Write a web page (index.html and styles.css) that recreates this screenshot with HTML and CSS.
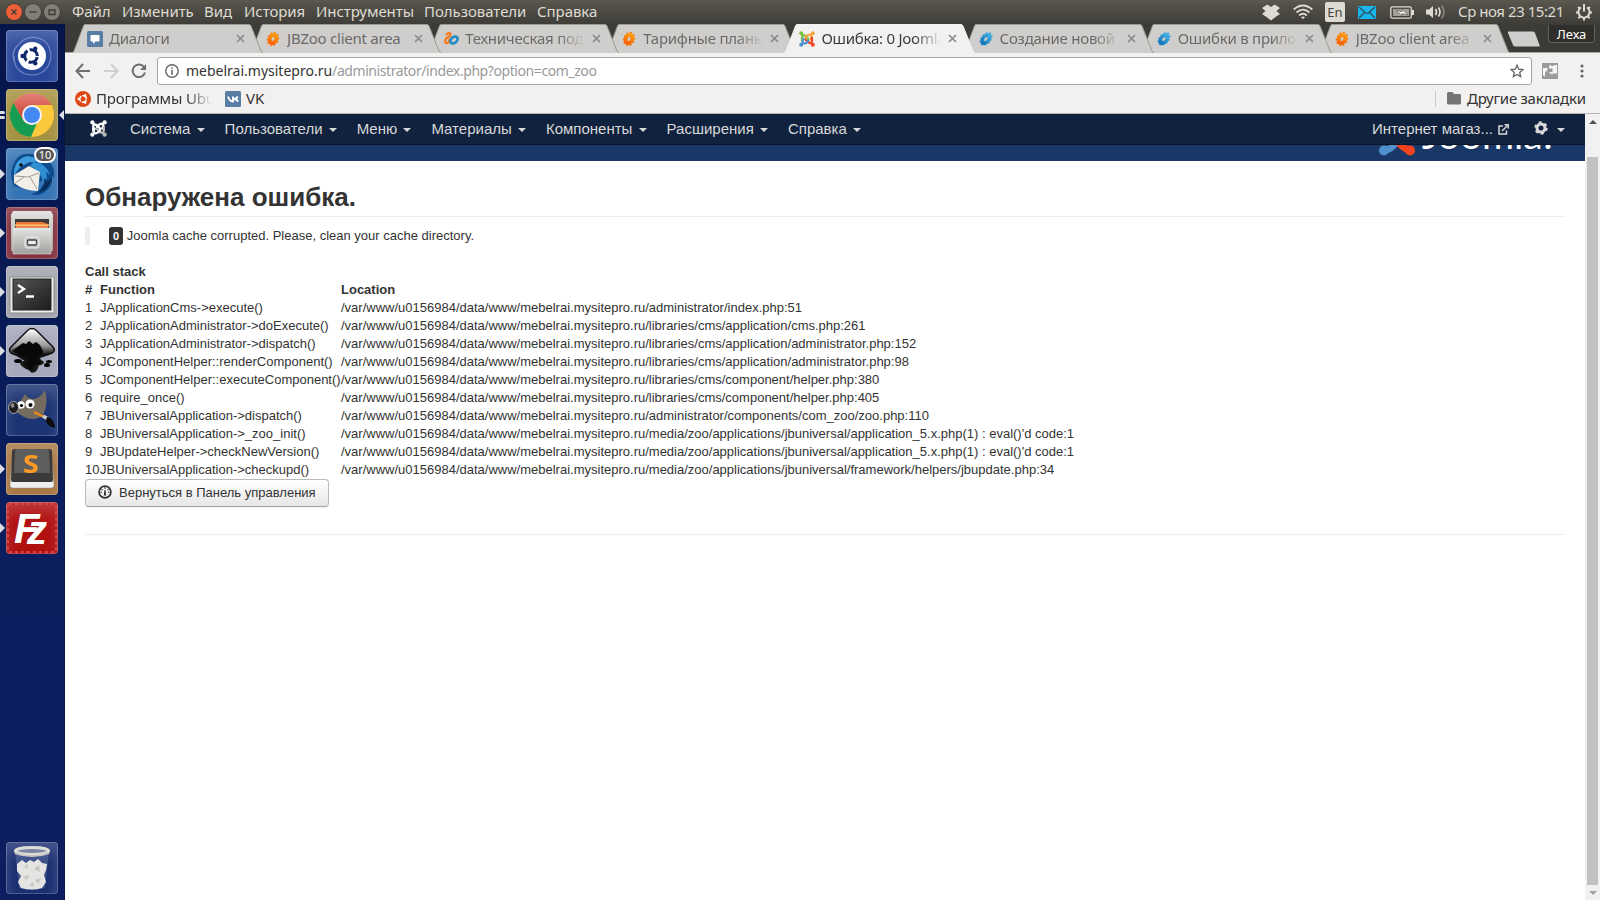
FILE: index.html
```html
<!DOCTYPE html>
<html lang="ru">
<head>
    <meta charset="utf-8">
    <title>Ошибка: 0 Joomla</title>
    <link rel="stylesheet" href="styles.css">
</head>
<body>
<!-- shared shapes -->
<svg class="defs" width="0" height="0">
    <defs>
        <linearGradient id="chromeRed" x1="0" y1="0" x2="0" y2="1"><stop offset="0" stop-color="#e2837a"/><stop offset="1" stop-color="#d0392d"/></linearGradient>
        <linearGradient id="metal" x1="0" y1="0" x2="0" y2="1"><stop offset="0" stop-color="#e4e4e2"/><stop offset="1" stop-color="#a09f9c"/></linearGradient>
        <linearGradient id="screen" x1="0" y1="0" x2="1" y2="1"><stop offset="0" stop-color="#555"/><stop offset="1" stop-color="#1c1c1c"/></linearGradient>
        <linearGradient id="ink" x1="0" y1="0" x2="0" y2="1"><stop offset="0" stop-color="#fff"/><stop offset="0.4" stop-color="#999"/><stop offset="0.6" stop-color="#111"/><stop offset="1" stop-color="#222"/></linearGradient>
        <linearGradient id="orange" x1="0" y1="0" x2="0" y2="1"><stop offset="0" stop-color="#ffa411"/><stop offset="1" stop-color="#f65a06"/></linearGradient>
        <linearGradient id="blue" x1="0" y1="0" x2="0" y2="1"><stop offset="0" stop-color="#43b4e6"/><stop offset="1" stop-color="#0f6db3"/></linearGradient>
        <symbol id="tab" viewBox="0 0 191 29">
            <path d="M0 29 Q1.500 28.500 2 27 L11.500 2 Q12 .5 13 .5 H177 Q178.500 .5 179 2 L189 27 Q189.500 28.500 191 29Z" class="tab-fill"/>
            <path d="M0 28.500 Q1.500 28.500 2 27 L11.500 2 Q12 .5 13 .5 H177 Q178.500 .5 179 2 L189 27 Q189.500 28.500 191 28.500" class="tab-line"/>
        </symbol>
        <symbol id="gear-orange" viewBox="0 0 16 16">
            <g transform="rotate(25 8 8)"><ellipse cx="8" cy="8" rx="5" ry="6.600" fill="none" stroke="#f77d0c" stroke-width="1.800" stroke-dasharray="2 1.600"/>
            <path fill="url(#orange)" fill-rule="evenodd" d="M8 1.800 A5 6.200 0 0 1 8 14.200 A5 6.200 0 0 1 8 1.800Z M8 6 A1.400 2 0 0 0 8 10 A1.400 2 0 0 0 8 6Z"/></g>
        </symbol>
        <symbol id="gear-blue" viewBox="0 0 16 16">
            <g transform="rotate(42 8 8)"><ellipse cx="8" cy="8" rx="4.400" ry="7" fill="none" stroke="#3aa0d8" stroke-width="1.600" stroke-dasharray="2 1.600"/>
            <path fill="url(#blue)" fill-rule="evenodd" d="M8 1.200 A4.600 6.800 0 0 1 8 14.800 A4.600 6.800 0 0 1 8 1.200Z M8 6 A1.200 2.200 0 0 0 8 10.400 A1.200 2.200 0 0 0 8 6Z"/></g>
        </symbol>
        <symbol id="joomla" viewBox="0 0 16 16">
            <g fill="none" stroke-width="2.200" stroke-linecap="round">
                <path class="j-g" d="M3 10 V6.500 Q3 3.500 6 4.500 L9.500 8 M2.500 2.500 L4 4.500"/>
                <path class="j-o" d="M6.500 6.500 L9 4 Q12.500 2.500 12.500 6 L11.500 8 M13.500 2.500 L12 4"/>
                <path class="j-r" d="M13 6.500 V10 Q12.500 13 9.500 11.500 L6.500 8.500 M13.500 13.500 L12 12"/>
                <path class="j-b" d="M9.500 9.500 L7 12 Q3.500 13.500 3.500 10 L4.500 8 M2.500 13.500 L4 12"/>
            </g>
            <circle class="j-gf" cx="2.200" cy="2.300" r="2"/><circle class="j-of" cx="13.800" cy="2.300" r="2"/>
            <circle class="j-rf" cx="13.800" cy="13.800" r="2"/><circle class="j-bf" cx="2.200" cy="13.800" r="2"/>
        </symbol>
        <symbol id="close" viewBox="0 0 9 9"><path d="M1 1 L8 8 M8 1 L1 8" stroke-width="1.700" fill="none"/></symbol>
        <symbol id="cof" viewBox="0 0 20 20">
            <circle cx="10" cy="10" r="5.500" fill="none" stroke="currentColor" stroke-width="2.600" stroke-dasharray="9.600 1.920" stroke-dashoffset="-1"/>
            <circle cx="2.600" cy="10" r="1.900" fill="currentColor"/><circle cx="13.700" cy="3.600" r="1.900" fill="currentColor"/><circle cx="13.700" cy="16.400" r="1.900" fill="currentColor"/>
        </symbol>
    </defs>
</svg>

<div class="panel">
    <div class="win-buttons">
        <span class="win win-close"><svg width="16" height="16" viewBox="0 0 16 16"><path d="M5.500 5.500 L10.500 10.500 M10.500 5.500 L5.500 10.500"/></svg></span>
        <span class="win"><svg width="16" height="16" viewBox="0 0 16 16"><path d="M4.500 8 H11.500"/></svg></span>
        <span class="win"><svg width="16" height="16" viewBox="0 0 16 16"><path d="M5 6 H11 V10.500 H5Z"/></svg></span>
    </div>
    <div class="menu">
        <span class="m1">Файл</span>
        <span class="m2">Изменить</span>
        <span class="m3">Вид</span>
        <span class="m4">История</span>
        <span class="m5">Инструменты</span>
        <span class="m6">Пользователи</span>
        <span class="m7">Справка</span>
    </div>
    <div class="indicators">
        <svg width="18" height="17" viewBox="0 0 18 17"><path fill="#dfdbd2" d="M5.300 .5 L9 3 12.700 .5 18 4 14.500 7 18 10 13.500 13 9 16.500 4.500 13 0 10 3.500 7 0 4Z"/></svg>
        <svg class="wifi" width="20" height="16" viewBox="0 0 20 16" fill="none" stroke="#dfdbd2" stroke-width="1.800"><path d="M.7 5.500 Q10 -2.500 19.300 5.500 M3.500 8.500 Q10 2.800 16.500 8.500 M6.200 11.500 Q10 8 13.800 11.500"/><path d="M8 13.500 Q10 11.500 12 13.500 L10 15Z" fill="#dfdbd2" stroke="none"/></svg>
        <span class="lang">En</span>
        <svg class="mail" width="18" height="13" viewBox="0 0 18 13"><path fill="#19b6ee" d="M0 0H18V13H0Z"/><path d="M1 1 L7 6.500 Q9 8 11 6.500 L17 1 M1 12 L6.500 6.500 M17 12 L11.500 6.500" fill="none" stroke="#2b4c55" stroke-width="1.200"/></svg>
        <svg class="battery" width="24" height="13" viewBox="0 0 24 13"><rect x=".8" y=".8" width="20.500" height="11.400" rx="1.500" fill="none" stroke="#dfdbd2" stroke-width="1.300"/><path fill="#a3a099" d="M3 3H19V10H3Z"/><path fill="#dfdbd2" d="M22 4H24V9H22Z"/><path fill="#fff" stroke="#55524b" stroke-width=".6" d="M6 4 L12 6 V3.500 L18 9 L12 7.500 V9.500Z"/></svg>
        <svg class="volume" width="20" height="16" viewBox="0 0 20 16"><path fill="#dfdbd2" d="M0 5.500H3L7 2V14L3 10.500H0Z"/><path d="M9.500 5 Q11.500 8 9.500 11 M12.500 3.500 Q15.500 8 12.500 12.500" fill="none" stroke="#dfdbd2" stroke-width="1.700"/><path d="M15.500 1.500 Q20.500 8 15.500 14.500" fill="none" stroke="#86837b" stroke-width="1.700"/></svg>
        <span class="clock">Ср ноя 23 15:21</span>
        <svg class="power" width="18" height="18" viewBox="0 0 18 18" fill="none" stroke="#dfdbd2"><path stroke-width="2" d="M6 4.300 A5.600 5.600 0 1 0 12 4.300 M9 1 V8.500"/><path stroke-width="2" d="M1 9.500H3.500 M14.500 9.500H17 M3.300 15.200L5 13.500 M14.700 15.200L13 13.500 M9 15V17.500 M3 4L4.800 5.500 M15 4L13.200 5.500"/></svg>
    </div>
</div>

<div class="desktop">
    <div class="launcher">
        <div class="tile tile-dash">
            <svg viewBox="0 0 52 52">
                <g fill="none" stroke="#a9b7e2" stroke-opacity=".55" stroke-width="1.200"><path d="M26 7 Q44 8 45 26 Q44 38 36 42 M8 26 Q8 44 26 45 Q37 45 42 36 M12 15 Q20 5 32 8 Q42 11 44 20 M9 34 Q4 22 12 15"/></g>
                <circle cx="26" cy="26" r="14" fill="#fff"/>
                <svg class="dash-cof" x="13" y="14.500" width="24" height="23"><use href="#cof"/></svg>
            </svg>
        </div>
        <div class="tile tile-chrome">
            <i class="pip pip-a"></i><i class="pip pip-b"></i><i class="focus"></i>
            <svg viewBox="0 0 52 52">
                <circle cx="26" cy="26" r="22" fill="#fdc93c"/>
                <path fill="url(#chromeRed)" d="M7.500 14 A22 22 0 0 1 45.500 16 H26 L17 31Z"/>
                <path fill="#169c53" d="M7.500 14 L17 31 A10.500 10.500 0 0 0 31 34 L25 48 A22 22 0 0 1 7.500 14Z"/>
                <circle cx="26" cy="26" r="10" fill="#f2f2f2"/><circle cx="26" cy="26" r="8" fill="#4488f4"/>
            </svg>
        </div>
        <div class="tile tile-bird">
            <i class="arrow"></i>
            <svg viewBox="0 0 52 52">
                <path fill="#0f4c8d" d="M8 38 Q2 25 9 13 Q14 5 22 6 Q34 5 42 12 Q49 18 48 30 L46 28 Q47 38 40 43 Q34 49 25 46 Q37 43 38 32 L15 40Z"/>
                <path fill="#3f9ddb" d="M8 22 Q11 10 21 8 Q32 9 36 16 Q26 11 18 17 Q13 19 8 28Z"/>
                <path fill="#2f8fd2" d="M27 14 Q40 15 44 27 L40 24 Q42 32 38 38 Q36 23 24 18Z"/>
                <path fill="#f2eee8" d="M8 27 L23 18 L34 24 L32 43 Q18 43 8 35Z"/>
                <path fill="none" stroke="#a49d92" d="M9 28 L22 29 L33 25 M9 35 L18 29 M31 41 L24 29"/>
                <path fill="#072b5a" d="M38 30 Q40 38 32 45 Q45 41 46 28 L42 34Z"/>
                <circle cx="15" cy="17" r="1.800" fill="#111"/>
            </svg>
            <span class="count">10</span>
        </div>
        <div class="tile tile-files">
            <i class="arrow"></i>
            <svg viewBox="0 0 52 52">
                <path fill="url(#metal)" d="M7 4 H45 L47 8 V44 H5 V8Z"/><path fill="#3f3d3a" d="M9 12H43V25H9Z"/>
                <path fill="#ea7635" d="M10 15H36L42 17V23H10Z"/><path fill="#ffc276" d="M9 17.500H43V19H9Z"/>
                <path fill="url(#metal)" stroke="#ddd" stroke-width=".6" d="M7 21H45V47H7Z"/>
                <rect x="19" y="30" width="14" height="11" rx="2" fill="#c6c6c4" stroke="#eee"/><rect x="21.500" y="33" width="9" height="5" rx="1" fill="#eee" stroke="#444" stroke-width="1.300"/>
            </svg>
        </div>
        <div class="tile tile-term">
            <i class="arrow"></i>
            <svg viewBox="0 0 52 52">
                <rect x="4" y="11" width="44" height="36" rx="1.500" fill="#eee" stroke="#888"/><rect x="7" y="13" width="38" height="31" fill="url(#screen)" stroke="#222"/>
                <path d="M12 19 L18 23 L12 27 M20 30.500 H28" fill="none" stroke="#fff" stroke-width="2.300"/>
            </svg>
        </div>
        <div class="tile tile-ink">
            <i class="arrow"></i>
            <svg viewBox="0 0 52 52">
                <path fill="url(#ink)" stroke="#111" stroke-width="1.500" d="M22 5 Q26 2 30 5 L47 22 Q50 26 46 28 Q38 31 34 32 Q32 35 37 37 Q37 39 32 40 Q31 47 26 47 Q24 44 20 43 Q12 39 17 37 Q22 36 15 33 Q11 30 5 28 Q2 25 5 22Z"/>
                <path fill="#090909" d="M14 20 L17 18 L20 19 L23 16 L27 19 L30 17 L34 20 L37 26 L36 30 L31 31 L32 35 L36 38 L29 40 L27 46 L21 42 L17 39 L23 36 L14 30 L6 26Z"/>
                <ellipse cx="12" cy="36" rx="4" ry="2"/><ellipse cx="41" cy="40" rx="3" ry="2"/><ellipse cx="43" cy="36.500" rx="3" ry="1.500"/>
            </svg>
        </div>
        <div class="tile tile-gimp">
            <svg viewBox="0 0 52 52">
                <path fill="#746c5e" d="M39 6 Q43 20 37 31 Q29 38 18 33 Q13 30 9 27 Q13 18 19 10 Q23 17 31 14 Q36 12 39 6Z"/>
                <circle cx="15" cy="21" r="3.800" fill="#fff"/><circle cx="24" cy="20" r="4.600" fill="#fff"/><circle cx="15.500" cy="21.500" r="1.600"/><circle cx="24.500" cy="21" r="2"/>
                <ellipse cx="7.500" cy="23.500" rx="5" ry="6" fill="#1d1d1d" stroke="#ccc" stroke-width=".8"/><ellipse cx="6.500" cy="21.500" rx="2" ry="2.300" fill="#888"/>
                <path d="M28 28 L38 33" stroke="#f28a1c" stroke-width="2.500"/><path d="M37 32 L42 35" stroke="#ccc" stroke-width="3.500"/><path fill="#0b0b0b" d="M41 33 Q48 34 49 44 Q40 42 40 36Z"/>
            </svg>
        </div>
        <div class="tile tile-subl">
            <i class="arrow"></i>
            <svg viewBox="0 0 52 52">
                <path fill="#eee" stroke="#999" stroke-width=".5" d="M7 8 H45 L48 42 Q48 45 45 45 H7 Q4 45 4 42Z"/>
                <path fill="#3a3a3a" d="M9 6 H43 Q46 6 46 9 L47 37 Q47 39 45 39 H7 Q5 39 5 37 L6 9 Q6 6 9 6Z"/><path fill="#5e5e5e" d="M11 6 H41 Q43 6 43 8 L44 30 H8 L9 8 Q9 6 11 6Z"/>
            </svg>
            <span class="letter-s">S</span>
        </div>
        <div class="tile tile-fz">
            <i class="arrow"></i>
            <svg viewBox="0 0 52 52"><rect x="2" y="2" width="48" height="48" rx="1" fill="none" stroke="#d34747" stroke-width="2" stroke-dasharray="3 3"/></svg>
            <span class="letter-f">F</span><span class="letter-z">z</span>
        </div>
        <div class="tile tile-trash">
            <svg viewBox="0 0 52 52">
                <path fill="#8e9cc8" fill-opacity=".3" d="M9 10 H43 L39 46 Q26 50 13 46Z"/>
                <path fill="#e4e4e2" d="M11 22 L16 18 L20 21 L24 18 L28 20 L32 17 L36 21 L41 22 L40 28 L38 33 L40 40 L36 46 Q26 49 15 46 L12 40 L15 34 L11 29Z"/>
                <path fill="#c6c6c4" d="M18 24 L22 22 L21 27Z M28 27 L33 23 L34 30Z M17 35 L23 33 L21 38Z M29 38 L35 36 L32 42Z M23 43 L27 40 L28 45Z"/>
                <ellipse cx="26" cy="9" rx="16.500" ry="3.500" fill="#7d83a4" stroke="#deded9" stroke-width="3"/>
                <path d="M9 11 Q26 17 43 11" fill="none" stroke="#c9c9c4" stroke-width="2"/>
            </svg>
        </div>
    </div>

    <div class="browser">
        <div class="tabstrip">
            <div class="tab z8">
                <svg class="shape"><use href="#tab"/></svg>
                <svg class="fav" viewBox="0 0 16 16"><rect width="16" height="16" rx="1.500" fill="#587ea5"/><path fill="#fff" d="M4.500 4H11.500Q12.500 4 12.500 5V9.500Q12.500 10.500 11.500 10.500H8.500L6 13V10.500H4.500Q3.500 10.500 3.500 9.500V5Q3.500 4 4.500 4Z"/></svg>
                <span class="title">Диалоги</span><svg class="x"><use href="#close"/></svg>
            </div>
            <div class="tab z7">
                <svg class="shape"><use href="#tab"/></svg><svg class="fav"><use href="#gear-orange"/></svg>
                <span class="title title-full">JBZoo client area</span><svg class="x"><use href="#close"/></svg>
            </div>
            <div class="tab z6">
                <svg class="shape"><use href="#tab"/></svg>
                <svg class="fav" viewBox="0 0 16 16"><path d="M3 4 Q6 .5 7.500 3 Q7 6 3.500 7 Q1 10.500 3 12 Q6 13 6.500 8" fill="none" stroke="#f47b20" stroke-width="2.300"/><ellipse cx="11" cy="9" rx="2.800" ry="4" transform="rotate(50 11 9)" fill="none" stroke="#2289c8" stroke-width="2.600"/></svg>
                <span class="title">Техническая поддержка</span><svg class="x"><use href="#close"/></svg>
            </div>
            <div class="tab z5">
                <svg class="shape"><use href="#tab"/></svg><svg class="fav"><use href="#gear-orange"/></svg>
                <span class="title">Тарифные планы</span><svg class="x"><use href="#close"/></svg>
            </div>
            <div class="tab active">
                <svg class="shape"><use href="#tab"/></svg><svg class="fav"><use href="#joomla"/></svg>
                <span class="title">Ошибка: 0 Joomla</span><svg class="x"><use href="#close"/></svg>
            </div>
            <div class="tab z3">
                <svg class="shape"><use href="#tab"/></svg><svg class="fav"><use href="#gear-blue"/></svg>
                <span class="title">Создание новой</span><svg class="x"><use href="#close"/></svg>
            </div>
            <div class="tab z2">
                <svg class="shape"><use href="#tab"/></svg><svg class="fav"><use href="#gear-blue"/></svg>
                <span class="title">Ошибки в приложении</span><svg class="x"><use href="#close"/></svg>
            </div>
            <div class="tab z1">
                <svg class="shape"><use href="#tab"/></svg><svg class="fav"><use href="#gear-orange"/></svg>
                <span class="title">JBZoo client area</span><svg class="x"><use href="#close"/></svg>
            </div>
            <svg class="newtab" width="34" height="16" viewBox="0 0 34 16"><path fill="#d0cecc" d="M2 .5H26Q27.500 .5 28 2L32.500 14Q33 15.500 31.500 15.500H8Q6.500 15.500 6 14L1 2Q.5 .5 2 .5Z"/></svg>
            <div class="profile">Леха</div>
        </div>

        <div class="toolbar">
            <svg class="back" width="16" height="16" viewBox="0 0 16 16"><path d="M8 1 L1.500 8 L8 15 M1.500 8 H15"/></svg>
            <svg class="forward" width="16" height="16" viewBox="0 0 16 16"><path d="M8 1 L14.500 8 L8 15 M14.500 8 H1"/></svg>
            <svg class="reload" width="16" height="16" viewBox="0 0 16 16"><path d="M13 4 A6.300 6.300 0 1 0 14 9.500"/><path class="solid" d="M15 1V7H9Z"/></svg>
            <div class="omnibox">
                <svg width="14" height="14" viewBox="0 0 14 14"><circle cx="7" cy="7" r="6.200" fill="none" stroke="#666" stroke-width="1.400"/><path fill="#666" d="M6.200 3.200H7.800V4.800H6.200Z M6.200 6H7.800V10.800H6.200Z"/></svg>
                <span class="url"><b>mebelrai.mysitepro.ru</b>/administrator/index.php?option=com_zoo</span>
                <svg class="star" width="14" height="14" viewBox="0 0 14 14"><path fill="none" stroke="#666" stroke-width="1.300" d="M7 1.200 L8.700 5.200 13 5.600 9.700 8.400 10.700 12.600 7 10.400 3.300 12.600 4.300 8.400 1 5.600 5.300 5.200Z"/></svg>
            </div>
            <svg class="ext" width="16" height="16" viewBox="0 0 16 16"><path fill="#9b9b9b" d="M0 0H16V16H0Z"/><path fill="#f4f4f4" d="M7 3 L9 1.500 V3 H12 V2 H15 V10.500 H11 L9.500 12 V10.500 H7.500 V9 H10.500 V5.500 H7Z"/><path fill="#f4f4f4" d="M1 5 H5.500 V7 L3 9.500 V14 L1 12Z"/></svg>
            <svg class="dots" width="4" height="14" viewBox="0 0 4 14"><circle cx="2" cy="2" r="1.600"/><circle cx="2" cy="7" r="1.600"/><circle cx="2" cy="12" r="1.600"/></svg>
        </div>

        <div class="bookmarks">
            <svg class="bm-ubuntu" width="16" height="16" viewBox="0 0 16 16"><circle cx="8" cy="8" r="8" fill="#dd4814"/><svg x="2" y="2" width="12" height="12"><use href="#cof"/></svg></svg>
            <span class="bm-apps">Программы Ubuntu</span>
            <svg class="bm-vkicon" width="16" height="16" viewBox="0 0 16 16"><rect width="16" height="16" rx="1.500" fill="#587ea5"/><path d="M3 5.500 Q4.500 10.500 8 10.500 V5.500 M12.800 5.500 Q11.500 8 8.500 8 Q12 8 13 10.700" fill="none" stroke="#fff" stroke-width="1.900"/></svg>
            <span class="bm-vk">VK</span>
            <div class="other">
                <svg width="14" height="13" viewBox="0 0 14 13"><path fill="#757575" d="M1.500 0H5.500L7 2H12.500Q14 2 14 3.500V11Q14 12.500 12.500 12.500H1.500Q0 12.500 0 11V1.500Q0 0 1.500 0Z"/></svg>
                <span class="bm-other">Другие закладки</span>
            </div>
        </div>

        <div class="viewport">
            <div class="page">
                <div class="navbar">
                    <svg class="brand" width="17" height="17"><use href="#joomla"/></svg>
                    <span class="nav">Система<i class="caret"></i></span>
                    <span class="nav">Пользователи<i class="caret"></i></span>
                    <span class="nav">Меню<i class="caret"></i></span>
                    <span class="nav">Материалы<i class="caret"></i></span>
                    <span class="nav">Компоненты<i class="caret"></i></span>
                    <span class="nav">Расширения<i class="caret"></i></span>
                    <span class="nav">Справка<i class="caret"></i></span>
                    <span class="site">Интернет магаз...
                        <svg width="11" height="11" viewBox="0 0 11 11" fill="none" stroke="#d9d9d9" stroke-width="1.500"><path d="M5 2H1V10H8.500V6.500 M4 7L9.500 1.500"/><path d="M6.500 .8H10.200V4.500"/></svg>
                    </span>
                    <span class="cog">
                        <svg width="14" height="14" viewBox="0 0 14 14"><circle cx="7" cy="7" r="4" fill="none" stroke="#d9d9d9" stroke-width="3"/><circle cx="7" cy="7" r="5.600" fill="none" stroke="#d9d9d9" stroke-width="2.200" stroke-dasharray="2.900 2.960"/></svg>
                        <i class="caret"></i>
                    </span>
                </div>
                <div class="header">
                    <div class="logo">
                        <svg width="38" height="38" viewBox="0 0 38 38"><path d="M6 32 Q12 32 15 28 L22 20" fill="none" stroke="#5091cd" stroke-width="7"/><path d="M32 33 Q25 30 20 24 L15 20" fill="none" stroke="#f44321" stroke-width="7"/><circle cx="6" cy="32.500" r="5" fill="#5091cd"/><circle cx="32" cy="32.500" r="5" fill="#f44321"/></svg>
                        <span>Joomla!</span>
                    </div>
                </div>
                <div class="content">
                    <h1>Обнаружена ошибка.</h1>
                    <blockquote><span class="label">0</span> Joomla cache corrupted. Please, clean your cache directory.</blockquote>
                    <table>
                        <tr><th colspan="3">Call stack</th></tr>
                        <tr><th class="num">#</th><th class="func">Function</th><th>Location</th></tr>
                        <tr><td>1</td><td>JApplicationCms-&gt;execute()</td><td>/var/www/u0156984/data/www/mebelrai.mysitepro.ru/administrator/index.php:51</td></tr>
                        <tr><td>2</td><td>JApplicationAdministrator-&gt;doExecute()</td><td>/var/www/u0156984/data/www/mebelrai.mysitepro.ru/libraries/cms/application/cms.php:261</td></tr>
                        <tr><td>3</td><td>JApplicationAdministrator-&gt;dispatch()</td><td>/var/www/u0156984/data/www/mebelrai.mysitepro.ru/libraries/cms/application/administrator.php:152</td></tr>
                        <tr><td>4</td><td>JComponentHelper::renderComponent()</td><td>/var/www/u0156984/data/www/mebelrai.mysitepro.ru/libraries/cms/application/administrator.php:98</td></tr>
                        <tr><td>5</td><td>JComponentHelper::executeComponent()</td><td>/var/www/u0156984/data/www/mebelrai.mysitepro.ru/libraries/cms/component/helper.php:380</td></tr>
                        <tr><td>6</td><td>require_once()</td><td>/var/www/u0156984/data/www/mebelrai.mysitepro.ru/libraries/cms/component/helper.php:405</td></tr>
                        <tr><td>7</td><td>JBUniversalApplication-&gt;dispatch()</td><td>/var/www/u0156984/data/www/mebelrai.mysitepro.ru/administrator/components/com_zoo/zoo.php:110</td></tr>
                        <tr><td>8</td><td>JBUniversalApplication-&gt;_zoo_init()</td><td>/var/www/u0156984/data/www/mebelrai.mysitepro.ru/media/zoo/applications/jbuniversal/application_5.x.php(1) : eval()'d code:1</td></tr>
                        <tr><td>9</td><td>JBUpdateHelper-&gt;checkNewVersion()</td><td>/var/www/u0156984/data/www/mebelrai.mysitepro.ru/media/zoo/applications/jbuniversal/application_5.x.php(1) : eval()'d code:1</td></tr>
                        <tr><td>10</td><td>JBUniversalApplication-&gt;checkupd()</td><td>/var/www/u0156984/data/www/mebelrai.mysitepro.ru/media/zoo/applications/jbuniversal/framework/helpers/jbupdate.php:34</td></tr>
                    </table>
                    <a class="btn">
                        <svg width="14" height="14" viewBox="0 0 14 14"><circle cx="7" cy="7" r="5.900" fill="none" stroke="#333" stroke-width="1.700"/><path fill="#333" d="M6.400 5H7.600L8.200 10.500H5.800Z M6.300 2.300H7.700V3.700H6.300Z M3.400 4H4.600V5.200H3.400Z M9.400 4H10.600V5.200H9.400Z M2.600 6.800H3.800V8H2.600Z M10.200 6.800H11.400V8H10.200Z"/></svg>
                        Вернуться в Панель управления
                    </a>
                    <hr>
                </div>
            </div>
            <div class="scrollbar">
                <i class="up"></i>
                <div class="thumb"></div>
                <i class="down"></i>
            </div>
        </div>
    </div>
</div>
</body>
</html>
```

FILE: styles.css
```css
* {
    box-sizing: border-box;
}

body {
    margin: 0;
    width: 1600px;
    height: 900px;
    overflow: hidden;
    display: flex;
    flex-direction: column;
    font-family: "Noto Sans", "Open Sans", sans-serif;
    font-size: 15px;
    color: #333;
    background: #fff;
}

svg {
    display: block;
    flex: none;
}

.defs {
    position: absolute;
}

/* top panel */
.panel {
    display: flex;
    align-items: center;
    height: 24px;
    flex: none;
    padding-left: 6px;
    padding-right: 7px;
    background: linear-gradient(#5c5a4e, #55524a 15%, #3e3d38);
    color: #dfdbd2;
    white-space: nowrap;
}

.win-buttons {
    display: flex;
    gap: 3px;
    width: 66px;
    margin-top: -1px;
}

.win {
    width: 16px;
    height: 16px;
    border-radius: 50%;
    background: #807e77;
    box-shadow: 0 0 0 0.5px #34332e;
}

.win svg {
    fill: none;
    stroke: #3c3b37;
    stroke-width: 1.3;
}

.win-close {
    background: #ed5f37;
}

.menu {
    display: flex;
    gap: 12px;
    padding-bottom: 2px;
    line-height: 22px;
    letter-spacing: -0.05px;
}

.m1 { width: 38px; }
.m2 { width: 70px; }
.m3 { width: 28px; }
.m4 { width: 60px; }
.m5 { width: 96px; }
.m6 { width: 101px; }

.indicators {
    display: flex;
    align-items: center;
    margin-left: auto;
}

.wifi { margin-left: 13px; }

.lang {
    width: 20px;
    height: 20px;
    margin-left: 12px;
    border-radius: 2px;
    background: #dfdbd2;
    color: #45433d;
    font-size: 13px;
    line-height: 20px;
    text-align: center;
}

.mail { margin-left: 13px; }
.battery { margin-left: 14px; }
.volume { margin-left: 12px; }

.clock {
    width: 104px;
    margin-left: 12px;
    padding-bottom: 2px;
    letter-spacing: -0.45px;
}

.power { margin-left: 13px; }

.desktop {
    display: flex;
    flex: 1;
    min-height: 0;
}

/* launcher */
.launcher {
    display: flex;
    flex-direction: column;
    gap: 7px;
    width: 65px;
    padding: 6px 0 6px 6px;
    background: linear-gradient(#06154a, #0a1d5c 50%, #0c1e60);
    border-right: 1px solid #0a1640;
}

.tile {
    position: relative;
    width: 52px;
    height: 52px;
    flex: none;
    border-radius: 4px;
    box-shadow: inset 0 0 0 1px rgba(255, 255, 255, 0.2), inset 0 10px 14px rgba(255, 255, 255, 0.18);
}

.tile > svg {
    width: 52px;
    height: 52px;
}

.tile-dash { background: #29479b; }
.dash-cof { color: #10276a; }
.tile-chrome { background: #a59240; }
.tile-bird { background: #3573b4; }
.tile-files { background: #83323f; }
.tile-term { background: #a3a5ad; }
.tile-ink { background: #a4a8ba; }
.tile-gimp { background: #1c3474; }
.tile-subl { background: #a97744; }
.tile-fz { background: #b01010; }

.tile-trash {
    margin-top: auto;
    background: #1c2f71;
}

/* running markers beside a tile */
.arrow {
    position: absolute;
    left: -6px;
    top: 21px;
    border: 5px solid transparent;
    border-left-color: #dcdde4;
    border-right: 0;
}

.focus {
    position: absolute;
    right: -6px;
    top: 21px;
    border: 5px solid transparent;
    border-right-color: #dcdde4;
    border-left: 0;
}

.pip {
    position: absolute;
    left: -6px;
    width: 5px;
    height: 3px;
    background: #dcdde4;
    border-radius: 0 2px 2px 0;
}

.pip-a { top: 22px; }
.pip-b { top: 27px; }

.count {
    position: absolute;
    top: -1px;
    right: 2px;
    width: 22px;
    height: 16px;
    border: 2px solid #fff;
    border-radius: 8px;
    background: #555;
    color: #fff;
    font-size: 11px;
    line-height: 12px;
    text-align: center;
}

.letter-s,
.letter-f,
.letter-z {
    position: absolute;
    font-weight: bold;
    line-height: 1;
}

.letter-s {
    left: 17px;
    top: 8px;
    font-size: 25px;
    color: #ff9a24;
    transform: scaleX(1.15);
    transform-origin: left;
}

.letter-f,
.letter-z {
    font-family: "Liberation Sans", sans-serif;
    font-style: italic;
    color: #fff;
}

.letter-f {
    left: 8px;
    top: 6px;
    font-size: 42px;
}

.letter-z {
    left: 21px;
    top: 8px;
    font-size: 40px;
}

/* tabs */
.browser {
    display: flex;
    flex-direction: column;
    flex: 1;
    min-width: 0;
    background: #f2f1f0;
}

.tabstrip {
    display: flex;
    height: 29px;
    flex: none;
    padding-left: 7px;
    background: #3c3b37;
    border-bottom: 1px solid #a5a4a2;
}

.tab {
    position: relative;
    display: flex;
    align-items: center;
    width: 191px;
    height: 29px;
    flex: none;
    margin-right: -12.9px;
    padding: 0 18px 0 15px;
    color: #6b6a68;
}

.shape {
    position: absolute;
    left: 0;
    top: 0;
    width: 191px;
    height: 29px;
    fill: #d0cecc;
    stroke: #9c9a97;
}

.tab-line {
    fill: none;
}

.tab-fill {
    stroke: none;
}

.active {
    z-index: 9;
    color: #3c3c3c;
}

.active .shape {
    fill: #f2f1f0;
    stroke: #f2f1f0;
}

.z8 { z-index: 8; }
.z7 { z-index: 7; }
.z6 { z-index: 6; }
.z5 { z-index: 5; }
.z3 { z-index: 3; }
.z2 { z-index: 2; }
.z1 { z-index: 1; }

.fav {
    position: relative;
    width: 16px;
    height: 16px;
}

.title {
    position: relative;
    flex: 1;
    min-width: 0;
    margin-left: 6px;
    margin-right: 7px;
    padding-bottom: 2px;
    overflow: hidden;
    white-space: nowrap;
    letter-spacing: -0.25px;
    -webkit-mask-image: linear-gradient(90deg, #000 78%, transparent);
    mask-image: linear-gradient(90deg, #000 78%, transparent);
}

.title-full {
    -webkit-mask-image: none;
    mask-image: none;
}

.x {
    position: relative;
    width: 9px;
    height: 9px;
    stroke: #8b8a88;
}

.j-g { stroke: #7ac143; }
.j-o { stroke: #f9a541; }
.j-r { stroke: #f44321; }
.j-b { stroke: #5091cd; }
.j-gf { fill: #7ac143; }
.j-of { fill: #f9a541; }
.j-rf { fill: #f44321; }
.j-bf { fill: #5091cd; }

.newtab {
    margin: 7px 0 0 10px;
}

.profile {
    width: 47px;
    height: 18px;
    margin: 1px 5px 0 auto;
    border: 1px solid #62615d;
    border-top: 0;
    border-radius: 0 0 4px 4px;
    background: #2f2e2b;
    color: #fff;
    font-size: 13px;
    line-height: 18px;
    text-align: center;
}

/* toolbar */
.toolbar {
    display: flex;
    align-items: center;
    height: 36px;
    flex: none;
    padding: 0 16px 0 10px;
}

.toolbar > svg {
    fill: none;
    stroke: #6f6f6f;
    stroke-width: 2;
}

.forward {
    margin-left: 12px;
    opacity: 0.25;
}

.reload {
    margin-left: 12px;
}

.toolbar .solid {
    fill: #6f6f6f;
    stroke: none;
}

.omnibox {
    display: flex;
    align-items: center;
    width: 1375px;
    height: 28px;
    margin-left: 10px;
    padding: 0 7px;
    border: 1px solid #a7a6a4;
    border-radius: 3px;
    background: #fff;
}

.url {
    margin-left: 7px;
    padding-bottom: 1px;
    color: #999;
    font-size: 14px;
    letter-spacing: -0.42px;
    white-space: nowrap;
}

.url b {
    font-weight: normal;
    letter-spacing: 0;
    color: #333;
}

.star {
    margin-left: auto;
}

.toolbar .ext {
    margin-left: 10px;
    stroke: none;
}

.toolbar .dots {
    margin-left: auto;
    stroke: none;
    fill: #666;
}

.bookmarks {
    display: flex;
    align-items: center;
    height: 25px;
    flex: none;
    border-bottom: 1px solid #b5b4b2;
    padding: 0 13px 5px 10px;
    white-space: nowrap;
}

.bm-ubuntu {
    color: #fff;
}

.bm-apps {
    width: 116px;
    margin-left: 5px;
    padding-bottom: 1px;
    overflow: hidden;
    letter-spacing: -0.15px;
    -webkit-mask-image: linear-gradient(90deg, #000 78%, transparent);
    mask-image: linear-gradient(90deg, #000 78%, transparent);
}

.bm-vkicon {
    margin-left: 13px;
}

.bm-vk {
    margin-left: 5px;
    padding-bottom: 1px;
}

.other {
    display: flex;
    align-items: center;
    gap: 6px;
    height: 16px;
    margin-left: auto;
    padding-left: 11px;
    border-left: 1px solid #c9c8c6;
}

.bm-other {
    width: 120px;
    padding-bottom: 2px;
    letter-spacing: -0.25px;
}

/* joomla administrator */
.viewport {
    display: flex;
    flex: 1;
    min-height: 0;
    background: #fff;
    font-family: "Liberation Sans", Arial, sans-serif;
    font-size: 13px;
    line-height: 18px;
}

.page {
    flex: 1;
    min-width: 0;
}

.navbar {
    display: flex;
    align-items: center;
    height: 31px;
    padding: 0 20px 0 25px;
    background: #10223e;
    border-bottom: 1px solid #0a1528;
    color: #d9d9d9;
    font-size: 15px;
}

.brand {
    margin-right: 13px;
    margin-top: -2px;
}

.navbar .brand {
    filter: grayscale(1) brightness(1.8);
}

.nav {
    padding: 0 10px;
}

.caret {
    display: inline-block;
    margin-left: 6.2px;
    border: 4px solid transparent;
    border-top-color: #d9d9d9;
    border-bottom: 0;
    vertical-align: 2px;
}

.site {
    display: flex;
    align-items: center;
    gap: 5px;
    margin-left: auto;
}

.cog {
    display: flex;
    align-items: center;
    gap: 9px;
    margin-left: 25px;
}

.cog svg {
    margin-top: -3px;
}

.cog .caret {
    margin: 2px 0 0;
}

.header {
    height: 16px;
    padding-right: 29px;
    background: #1a3867;
    overflow: hidden;
}

.logo {
    display: flex;
    justify-content: flex-end;
    margin-top: -27px;
}

.logo span {
    width: 134px;
    margin-top: -3px;
    margin-left: 6px;
    color: #fff;
    font-family: Lato, sans-serif;
    font-size: 39px;
    line-height: 38px;
}

.content {
    padding: 20px 20px 0;
}

h1 {
    margin: 0 0 10px;
    padding-bottom: 1px;
    height: 36px;
    border-bottom: 1px solid #eee;
    font-size: 26px;
    line-height: 32px;
}

blockquote {
    margin: 0 0 18px;
    padding-left: 19px;
    height: 18px;
    border-left: 5px solid #eee;
}

.label {
    display: inline-block;
    padding: 0 4px;
    height: 18px;
    border-radius: 3px;
    background: #333;
    color: #fff;
    font-size: 11px;
    font-weight: bold;
}

table {
    border-collapse: collapse;
}

th,
td {
    padding: 0;
    text-align: left;
    white-space: nowrap;
}

.num {
    width: 15px;
}

.func {
    width: 241px;
}

.btn {
    display: flex;
    align-items: center;
    gap: 7px;
    width: 244px;
    height: 28px;
    padding: 0 12px;
    border: 1px solid #bbb;
    border-bottom-color: #a2a2a2;
    border-radius: 4px;
    background: linear-gradient(#fff, #e6e6e6);
    box-shadow: 0 1px 2px rgba(0, 0, 0, 0.05);
}

.btn svg {
    margin-top: -2px;
}

hr {
    margin: 27px 0 0;
    border: 0;
    border-top: 1px solid #eee;
}

.scrollbar {
    display: flex;
    flex-direction: column;
    align-items: center;
    width: 15px;
    padding: 6px 0 5px;
    background: #f1f1f1;
}

.up,
.down {
    border: 4px solid transparent;
}

.up {
    border-bottom-color: #505050;
    border-top: 0;
}

.down {
    border-top-color: #a3a3a3;
    border-bottom: 0;
}

.thumb {
    width: 11px;
    height: 728px;
    margin: 33px 0 auto;
    background: #c1c1c1;
}
```
